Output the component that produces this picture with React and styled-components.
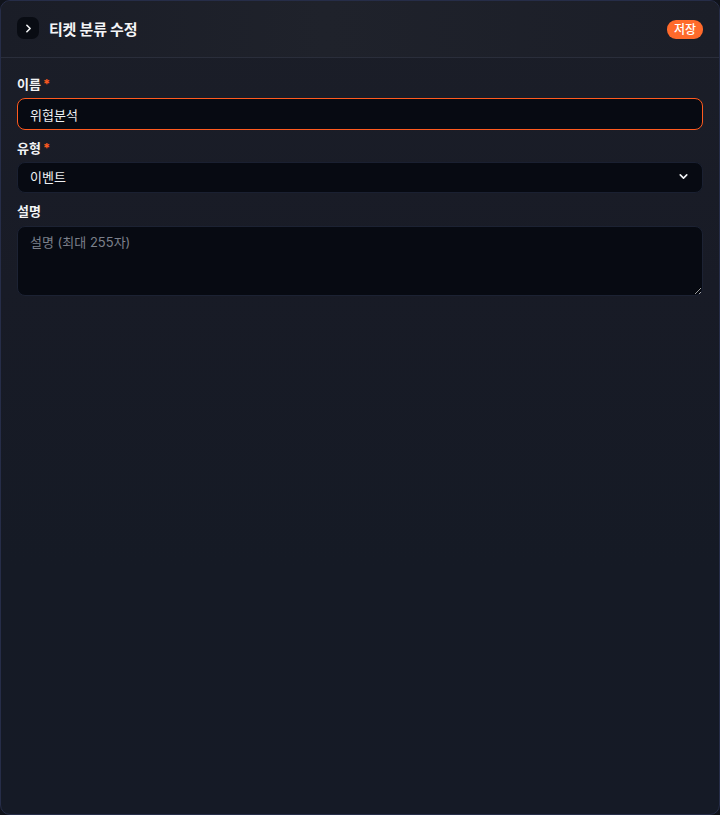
import React from 'react'
import styled, { createGlobalStyle } from 'styled-components'

const GlobalStyle = createGlobalStyle`
  html, body {
    margin: 0;
    padding: 0;
    height: 100%;
    background: #10131b;
  }
  body {
    font-family: "Inter", "Noto Sans CJK KR", sans-serif;
  }
  * { box-sizing: border-box; }
`

const Panel = styled.div`
  width: 720px;
  height: 815px;
  border: 1px solid #262d48;
  border-radius: 10px;
  background: linear-gradient(180deg, #1b1e28 0%, #181b26 35%, #151a25 70%, #151a26 100%);
  display: flex;
  flex-direction: column;
  overflow: hidden;
`

const Header = styled.div`
  height: 57px;
  flex-shrink: 0;
  display: flex;
  align-items: center;
  justify-content: space-between;
  padding: 0 16px;
  border-bottom: 1px solid #2a2e3b;
  background: linear-gradient(90deg, #1a1d27 0%, #1f222b 45%, #1b1e28 100%);
`

const TitleGroup = styled.div`
  display: flex;
  align-items: center;
  gap: 10px;
  margin-top: -2px;
`

const IconButton = styled.button`
  width: 22px;
  height: 22px;
  border: none;
  border-radius: 7px;
  background: #090c13;
  color: #f2f3f5;
  display: flex;
  align-items: center;
  justify-content: center;
  padding: 0;
`

const Title = styled.h1`
  margin: 0;
  font-size: 15px;
  font-weight: 700;
  color: #f4f5f7;
  letter-spacing: -0.2px;
`

const SaveButton = styled.button`
  height: 19px;
  padding: 0 7px;
  border: none;
  border-radius: 9px;
  background: #ff6a2b;
  color: #ffffff;
  font-family: inherit;
  font-size: 12px;
  font-weight: 500;
  line-height: 19px;
  margin-top: 1px;
`

const Body = styled.form`
  display: flex;
  flex-direction: column;
  gap: 9px;
  padding: 17px 16px;
`

const Field = styled.div`
  display: flex;
  flex-direction: column;
  gap: 5px;
`

const Label = styled.label`
  font-size: 13px;
  font-weight: 700;
  line-height: 18px;
  color: #f2f3f5;
  display: flex;
  gap: 2px;
`

const Required = styled.span`
  color: #ff5a1f;
`

const controlBase = `
  width: 100%;
  border-radius: 8px;
  background: #070a12;
  color: #eef0f3;
  font-family: inherit;
  font-size: 13px;
  outline: none;
`

const TextInput = styled.input`
  ${controlBase}
  height: 32px;
  padding: 0 12px;
  border: 1px solid ${p => (p.$focused ? '#ff5a1f' : '#1c2233')};
`

const SelectBox = styled.div`
  ${controlBase}
  height: 31px;
  padding: 0 12px;
  border: 1px solid #1a2031;
  display: flex;
  align-items: center;
  justify-content: space-between;
  padding-bottom: 2px;
`

const TextArea = styled.textarea`
  ${controlBase}
  height: 70px;
  margin-top: 1px;
  padding: 6px 12px;
  border: 1px solid #1c2233;
  resize: vertical;
  line-height: 18px;
  &::placeholder {
    color: #7b808b;
  }
`

const Chevron = ({ dir }) => (
  <svg width="13" height="13" viewBox="0 0 24 24" fill="none" stroke="currentColor" strokeWidth="3" strokeLinecap="round" strokeLinejoin="round">
    {dir === 'right' ? <path d="m9 18 6-6-6-6" /> : <path d="m6 9 6 6 6-6" />}
  </svg>
)

export default function App() {
  return (
    <>
      <GlobalStyle />
      <Panel>
        <Header>
          <TitleGroup>
            <IconButton type="button"><Chevron dir="right" /></IconButton>
            <Title>티켓 분류 수정</Title>
          </TitleGroup>
          <SaveButton type="button">저장</SaveButton>
        </Header>
        <Body onSubmit={e => e.preventDefault()}>
          <Field>
            <Label>이름<Required>*</Required></Label>
            <TextInput $focused defaultValue="위협분석" />
          </Field>
          <Field>
            <Label>유형<Required>*</Required></Label>
            <SelectBox>
              <span>이벤트</span>
              <Chevron dir="down" />
            </SelectBox>
          </Field>
          <Field>
            <Label>설명</Label>
            <TextArea placeholder="설명 (최대 255자)" />
          </Field>
        </Body>
      </Panel>
    </>
  )
}
